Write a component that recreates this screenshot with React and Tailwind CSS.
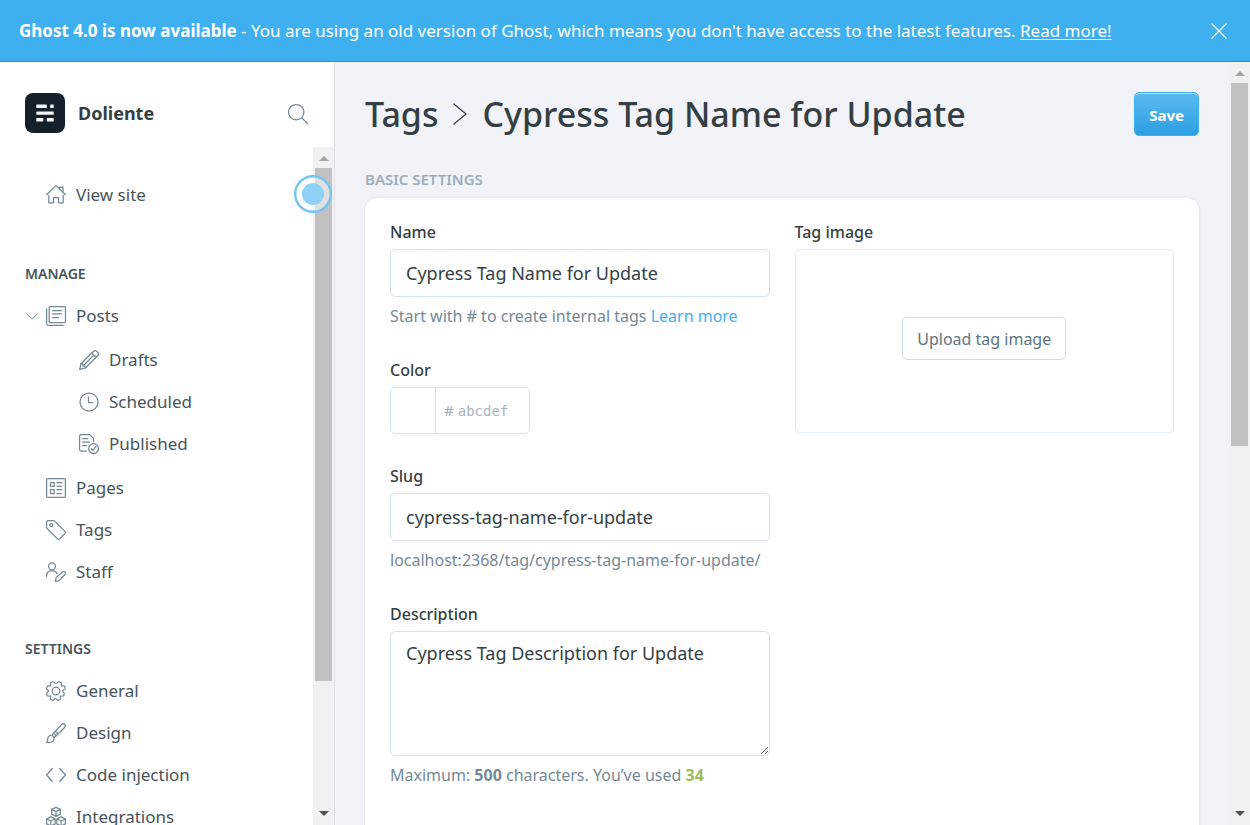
import React from 'react';

function Icon({ children, className = '' }) {
  return (
    <svg
      viewBox="0 0 20 20"
      className={`size-5 shrink-0 overflow-visible ${className}`}
      fill="none"
      stroke="#738a94"
      strokeWidth="1.25"
      strokeLinecap="round"
      strokeLinejoin="round"
      aria-hidden="true"
    >
      {children}
    </svg>
  );
}

const icons = {
  site: (
    <Icon>
      <path d="M.5 9.700 10 .6l9.500 9.100" />
      <path d="M13.500 3.900V2.200h3.500v5" />
      <path d="M2.800 10.300v7.500h4.700v-5.200h5v5.200h4.700v-7.500" />
    </Icon>
  ),
  posts: (
    <Icon>
      <rect x="3.200" y=".6" width="16.300" height="16" rx="1" />
      <path d="M.6 2.800v14.800c0 1.100.8 1.800 1.800 1.800h14.800" />
      <path d="M6.500 4.500h9M6.500 7.800h9M6.500 11.500h6" />
    </Icon>
  ),
  drafts: (
    <Icon>
      <path d="M.7 19.300 2 13.700 14.300 1.500c1.100-1.100 2.600-1.100 3.600-.1l.8.8c1 1 1 2.500-.1 3.600L6.300 18Z" />
      <path d="M12.800 3l4.200 4.200M2 13.700l1.800.5.3 1.700 1.700.4.500 1.700M5 15l9.500-9.500" />
    </Icon>
  ),
  scheduled: (
    <Icon>
      <circle cx="10" cy="10" r="9" />
      <path d="M9.500 4.800v5.700h4.300" />
    </Icon>
  ),
  published: (
    <Icon>
      <path d="M7.500 17H2C1.200 17 .6 16.400.6 15.600V2C.6 1.200 1.200.6 2 .6h8.700L14.500 4.400v3.300" />
      <path d="M3.500 4.500h5.300M3.500 8h7M3.500 11.500h4.300" />
      <circle cx="14.600" cy="14.600" r="4.900" />
      <path d="m12.300 14.800 1.600 1.700 2.900-3.900" />
    </Icon>
  ),
  pages: (
    <Icon>
      <rect x=".6" y=".6" width="18.800" height="18.800" rx="1" />
      <rect x="4.500" y="4.500" width="3.800" height="3.800" />
      <rect x="4.500" y="11.700" width="3.800" height="3.800" />
      <path d="M11 4.500h5M11 8.300h4.500M11 11.700h5M11 15.500h4.500" />
    </Icon>
  ),
  tags: (
    <Icon>
      <path d="M.6 7.300V2C.6 1.200 1.200.6 2 .6h5.400c.5 0 .9.200 1.200.5l10.400 10.300c.6.600.6 1.400 0 2l-5.500 5.500c-.6.600-1.400.600-2 0L1.100 8.500C.8 8.200.6 7.800.6 7.300Z" />
      <circle cx="5.200" cy="5.100" r="1.500" />
    </Icon>
  ),
  staff: (
    <Icon>
      <circle cx="6" cy="4.300" r="3.500" />
      <path d="M.5 14.500c0-3.700 2.300-5.800 5.500-5.800 2.200 0 4 1 4.900 2.700" />
      <path d="m9.300 19.400.8-3.800 6.200-5.600c.8-.7 1.800-.7 2.500 0 .8.700.8 1.700.1 2.500l-6 6.100Z" />
    </Icon>
  ),
  general: (
    <Icon>
      <circle cx="10" cy="10" r="3.800" />
      <path d="m8.700 2.100-1.300-1.200c-.3-.2-.7-.2-1.100 0L5 1.500c-.4.200-.6.500-.5.900l.1 1.800c0 .5-.3.900-.8.800l-1.600-.1c-.4 0-.8.200-.9.500L.6 7c-.1.400 0 .7.300 1l1.200 1.300c.4.400.4 1 0 1.400L.9 12c-.3.300-.4.600-.3 1l.7 1.600c.1.300.5.500.9.500l1.600-.1c.5-.1.800.3.800.8l-.1 1.800c-.1.400.1.700.5.900l1.300.6c.4.200.8.200 1.100-.1l1.200-1.200c.4-.4 1-.4 1.400 0l1.300 1.300c.3.200.7.200 1.100 0l1.400-.6c.4-.2.5-.5.5-.9l-.1-1.800c0-.5.3-.9.8-.8l1.700.1c.4 0 .7-.2.9-.5l.6-1.600c.1-.4 0-.7-.2-1l-1.200-1.300c-.4-.4-.4-1 0-1.400L19 8c.2-.3.3-.6.2-1l-.6-1.600c-.2-.3-.5-.5-.9-.5l-1.700.1c-.5.1-.8-.3-.8-.8l.1-1.800c0-.4-.1-.7-.5-.9L13.400.9c-.4-.2-.8-.2-1.100 0l-1.300 1.200c-.7.600-1.600.6-2.300 0Z" />
    </Icon>
  ),
  design: (
    <Icon>
      <path d="M.6 19.400c1.300-1.100 1-2.600 1.300-4.300.4-1.900 2-3 3.700-2.600 1.800.4 2.800 2 2.400 3.700-.6 2.600-3.600 3.700-7.400 3.200Z" />
      <path d="m6.200 12.300 1.200-2.100 2.900 2.500-2.200 1.700M7.400 10.200l7.900-8.300c1.100-1.200 2.400-1.500 3.300-.7.900.8.900 2.100-.1 3.300l-8.200 8.200M9.300 8.300l2.700 2.500" />
    </Icon>
  ),
  code: (
    <Icon>
      <path d="M6.300 3.500.5 10l5.800 6.500M13.700 3.500l5.800 6.500-5.800 6.500" />
    </Icon>
  ),
  integrations: (
    <Icon>
      <path d="m10 .4 4.400 2v4.900L10 9.400 5.600 7.300V2.400ZM5.600 2.400 10 4.500l4.400-2.100M10 4.500v4.900" />
      <path d="m4.900 9.900 4.300 2v5l-4.300 2.100-4.300-2.100v-5ZM.6 11.900l4.300 2.100 4.300-2.100M4.900 14v5" />
      <path d="m15.100 9.900 4.300 2v5l-4.300 2.100-4.300-2.100v-5ZM10.800 11.900l4.300 2.100 4.300-2.100M15.100 14v5" />
    </Icon>
  ),
};

function NavItem({ icon, children, nested }) {
  return (
    <li>
      <a href="#" className={`flex h-[42px] items-center gap-2.5 text-[17px] text-[#47545a] ${nested ? 'pl-[79px]' : 'pl-[46px]'}`}>
        {icons[icon]}
        {children}
      </a>
    </li>
  );
}

function Scrollbar({ thumb }) {
  return (
    <div className="flex w-[21px] shrink-0 flex-col items-center bg-[#f1f1f1]" aria-hidden="true">
      <div className="flex h-[21px] w-full shrink-0 items-center justify-center pt-0.5">
        <svg viewBox="0 0 10 5" className="h-[5px] w-2.5" fill="#a3a3a3"><path d="M5 0l5 5H0z" /></svg>
      </div>
      <div className="flex w-[17px] grow flex-col">
        <div className={`bg-[#c1c1c1] ${thumb}`} />
      </div>
      <div className="flex h-[21px] w-full shrink-0 items-center justify-center pb-0.5">
        <svg viewBox="0 0 10 5" className="h-[5px] w-2.5" fill="#505050"><path d="M0 0h10L5 5z" /></svg>
      </div>
    </div>
  );
}

function Sidebar() {
  return (
    <aside className="relative flex w-[335px] shrink-0 flex-col border-r border-[#dfe1e6] bg-white">
      <div className="flex items-center pt-[31px] pr-[26px] pb-3.5 pl-[25px]">
        <svg viewBox="0 0 40 40" className="size-10" aria-hidden="true">
          <rect width="40" height="40" rx="8" fill="#15212a" />
          <g fill="#f3f5f8">
            <rect x="11.300" y="11.500" width="10.500" height="3.500" rx=".5" />
            <rect x="25.200" y="11.500" width="3.500" height="3.500" rx=".5" />
            <rect x="11.300" y="18.500" width="17.400" height="3.200" rx=".5" />
            <rect x="11.300" y="25" width="7" height="3.500" rx=".5" />
            <rect x="21.800" y="25" width="6.900" height="3.500" rx=".5" />
          </g>
        </svg>
        <span className="ml-[13px] grow text-lg font-bold text-[#343f44]">Doliente</span>
        <button type="button" aria-label="Search" className="pt-px">
          <Icon>
            <circle cx="8.200" cy="8.200" r="7.700" />
            <path d="m13.700 13.700 6 6" />
          </Icon>
        </button>
      </div>
      <div className="flex min-h-0 grow">
        <nav className="min-w-0 grow overflow-hidden pt-[27px]">
          <ul>
            <NavItem icon="site">View site</NavItem>
          </ul>
          <h2 className="mt-12 mb-[11px] pl-[25px] text-sm leading-5 font-semibold text-[#47545a]">MANAGE</h2>
          <ul>
            <li className="flex items-center">
              <button type="button" aria-label="Collapse posts" className="ml-[26px] w-5">
                <svg viewBox="0 0 12 7" className="h-[7px] w-3" fill="none" stroke="#738a94" strokeLinecap="round" strokeLinejoin="round">
                  <path d="m.5.8 5.500 5.400L11.500.8" />
                </svg>
              </button>
              <a href="#" className="flex h-[42px] items-center gap-2.5 text-[17px] text-[#47545a]">
                {icons.posts}
                Posts
              </a>
            </li>
            <li className="py-0.5">
              <ul>
                <NavItem nested icon="drafts">Drafts</NavItem>
                <NavItem nested icon="scheduled">Scheduled</NavItem>
                <NavItem nested icon="published">Published</NavItem>
              </ul>
            </li>
            <NavItem icon="pages">Pages</NavItem>
            <NavItem icon="tags">Tags</NavItem>
            <NavItem icon="staff">Staff</NavItem>
          </ul>
          <h2 className="mt-[46px] mb-[11px] pl-[25px] text-sm leading-5 font-semibold text-[#47545a]">SETTINGS</h2>
          <ul>
            <NavItem icon="general">General</NavItem>
            <NavItem icon="design">Design</NavItem>
            <NavItem icon="code">Code injection</NavItem>
            <NavItem icon="integrations">Integrations</NavItem>
          </ul>
        </nav>
        <Scrollbar thumb="h-[513px]" />
      </div>
      <svg viewBox="0 0 38 38" className="pointer-events-none absolute top-[113px] right-0.5 size-[38px]" aria-hidden="true">
        <circle cx="19" cy="19" r="17.800" fill="#fff" fillOpacity=".5" stroke="#74c5f2" strokeWidth="2.400" />
        <circle cx="19" cy="19" r="11" fill="#8fd0f7" />
      </svg>
    </aside>
  );
}

const label = 'mb-[5px] block text-base leading-6 font-medium text-[#343f44]';
const field = 'block w-full rounded-[5px] border border-[#d5e3ec] bg-white px-[15px] text-lg text-[#343f44] outline-none';
const hint = 'mt-[7px] text-base leading-6 text-[#738a94]';

export default function App() {
  return (
    <div className="flex h-screen flex-col overflow-hidden font-['Noto_Sans','Open_Sans',sans-serif]">
      <div className="flex shrink-0 items-center justify-between gap-4 border-b border-[#1e96db] bg-[#3eb0ef] px-[19px] text-[17px] leading-[61px] whitespace-nowrap text-white">
        <p>
          <strong className="font-bold">Ghost 4.0 is now available</strong> - You are using an old version of Ghost, which means you don't have access to the latest features.{' '}
          <a href="#" className="underline underline-offset-2">Read more!</a>
        </p>
        <button type="button" aria-label="Close" className="mr-1">
          <svg viewBox="0 0 16 16" className="size-4" fill="none" stroke="#fff" strokeWidth="1.200" strokeLinecap="round">
            <path d="m1 1 14 14M15 1 1 15" />
          </svg>
        </button>
      </div>

      <div className="flex min-h-0 grow">
        <Sidebar />
        <main className="min-w-0 grow overflow-hidden bg-[#f1f3f8] px-[30px] pt-[30px]">
          <header className="flex items-center justify-between">
            <h1 className="flex items-center text-[34px] leading-[44px] font-medium whitespace-nowrap text-[#343f44]">
              <a href="#">Tags</a>
              <svg viewBox="0 0 14 22" className="mx-[15px] h-[22px] w-3.5" fill="none" stroke="#343f44" strokeWidth="1.200" strokeLinecap="round" strokeLinejoin="round" aria-hidden="true">
                <path d="m1 1 12 10L1 21" />
              </svg>
              Cypress Tag Name for Update
            </h1>
            <button type="button" className="h-11 rounded-[5px] border border-[#3eb0ef] bg-linear-to-b from-[#5abaf0] to-[#2a9fe2] px-3.5 pt-0.5 text-[15px] font-bold text-white shadow-[inset_0_1px_0_#b9e2f9]">
              Save
            </button>
          </header>

          <h2 className="mt-[33px] mb-[9px] text-[15px] leading-5 font-semibold text-[#9baeb8]">BASIC SETTINGS</h2>
          <form className="grid grid-cols-2 gap-x-[25px] rounded-xl bg-white px-[25px] pt-[22px] pb-20 shadow-[0_0_3px_rgba(40,60,80,0.12)]">
            <div className="flex flex-col gap-[30px]">
              <div>
                <label htmlFor="tag-name" className={label}>Name</label>
                <input id="tag-name" className={`${field} h-12`} defaultValue="Cypress Tag Name for Update" />
                <p className={hint}>Start with # to create internal tags <a href="#" className="text-[#3eb0ef]">Learn more</a></p>
              </div>
              <div>
                <label htmlFor="tag-color" className={label}>Color</label>
                <div className="flex h-[47px] w-[140px] items-center overflow-hidden rounded-[5px] border border-[#d5e3ec]">
                  <span className="h-full w-[45px] shrink-0 border-r border-[#d5e3ec]" />
                  <span className="pr-1 pl-2 text-[15px] text-[#9baeb8]">#</span>
                  <input id="tag-color" placeholder="abcdef" className="min-w-0 grow font-['DejaVu_Sans_Mono',monospace] text-sm outline-none placeholder:text-[#a6b5bd]" />
                </div>
              </div>
              <div>
                <label htmlFor="tag-slug" className={label}>Slug</label>
                <input id="tag-slug" className={`${field} h-12`} defaultValue="cypress-tag-name-for-update" />
                <p className={hint}>localhost:2368/tag/cypress-tag-name-for-update/</p>
              </div>
              <div>
                <label htmlFor="tag-description" className={label}>Description</label>
                <textarea id="tag-description" className={`${field} h-[125px] resize-y pt-[7px] leading-7`} defaultValue="Cypress Tag Description for Update" />
                <p className={hint}>Maximum: <b>500</b> characters. You’ve used <b className="text-[#9fbb58]">34</b></p>
              </div>
            </div>
            <div>
              <label htmlFor="tag-image" className={label}>Tag image</label>
              <div className="flex h-[184px] items-center justify-center rounded-[5px] border border-[#e3eef5] pb-[5px]">
                <button id="tag-image" type="button" className="h-[43px] rounded-[5px] border border-[#d3dfe5] px-3.5 text-base text-[#5d7480]">
                  Upload tag image
                </button>
              </div>
            </div>
          </form>
        </main>
        <Scrollbar thumb="h-[363px]" />
      </div>
    </div>
  );
}
